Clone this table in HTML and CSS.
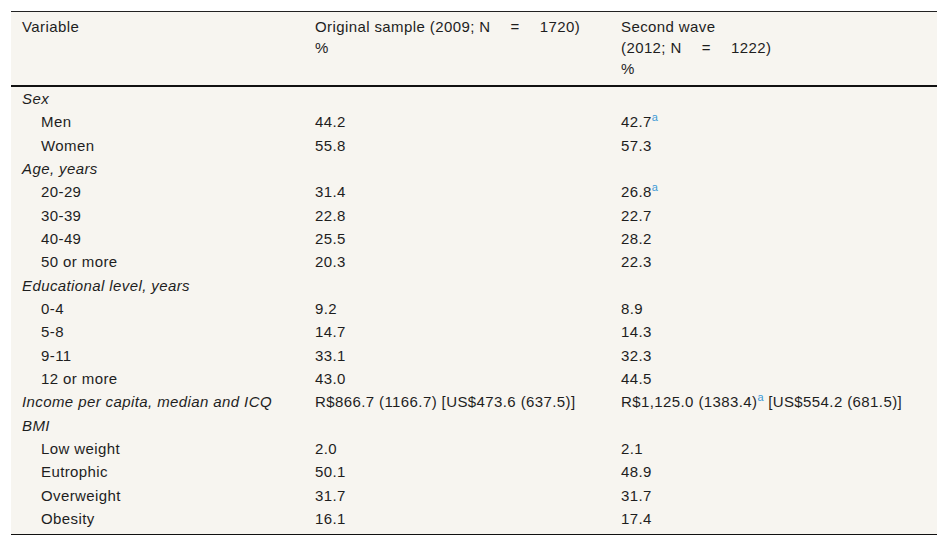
FILE: index.html
```html
<!DOCTYPE html>
<html lang="en">
<head>
<meta charset="utf-8">
<title>Table</title>
<link rel="stylesheet" href="styles.css">
</head>
<body>
<div class="wrap">
<table class="data">
  <colgroup>
    <col class="c1"><col class="c2"><col class="c3">
  </colgroup>
  <thead>
    <tr>
      <th>Variable</th>
      <th>Original sample (2009; N<span class="eq">=</span>1720)<br>%</th>
      <th>Second wave<br>(2012; N<span class="eq">=</span>1222)<br>%</th>
    </tr>
  </thead>
  <tbody>
    <tr><td class="grp">Sex</td><td></td><td></td></tr>
    <tr><td class="sub">Men</td><td>44.2</td><td>42.7<sup class="fn">a</sup></td></tr>
    <tr><td class="sub">Women</td><td>55.8</td><td>57.3</td></tr>
    <tr><td class="grp">Age, years</td><td></td><td></td></tr>
    <tr><td class="sub">20-29</td><td>31.4</td><td>26.8<sup class="fn">a</sup></td></tr>
    <tr><td class="sub">30-39</td><td>22.8</td><td>22.7</td></tr>
    <tr><td class="sub">40-49</td><td>25.5</td><td>28.2</td></tr>
    <tr><td class="sub">50 or more</td><td>20.3</td><td>22.3</td></tr>
    <tr><td class="grp">Educational level, years</td><td></td><td></td></tr>
    <tr><td class="sub">0-4</td><td>9.2</td><td>8.9</td></tr>
    <tr><td class="sub">5-8</td><td>14.7</td><td>14.3</td></tr>
    <tr><td class="sub">9-11</td><td>33.1</td><td>32.3</td></tr>
    <tr><td class="sub">12 or more</td><td>43.0</td><td>44.5</td></tr>
    <tr><td class="grp">Income per capita, median and ICQ</td><td>R$866.7 (1166.7) [US$473.6 (637.5)]</td><td>R$1,125.0 (1383.4)<sup class="fn">a</sup> [US$554.2 (681.5)]</td></tr>
    <tr><td class="grp">BMI</td><td></td><td></td></tr>
    <tr><td class="sub">Low weight</td><td>2.0</td><td>2.1</td></tr>
    <tr><td class="sub">Eutrophic</td><td>50.1</td><td>48.9</td></tr>
    <tr><td class="sub">Overweight</td><td>31.7</td><td>31.7</td></tr>
    <tr class="last"><td class="sub">Obesity</td><td>16.1</td><td>17.4</td></tr>
  </tbody>
</table>
</div>
</body>
</html>
```

FILE: styles.css
```css
html, body {
  margin: 0;
  padding: 0;
  background: #ffffff;
}

.wrap {
  padding: 11px 0 0 11px;
}

.data {
  width: 926px;
  table-layout: fixed;
  border-collapse: collapse;
  background: #f7f5f0;
  font-family: "Liberation Sans", Arial, sans-serif;
  font-size: 15px;
  letter-spacing: 0.4px;
  color: #1e1e1e;
}

.c1 { width: 293px; }
.c2 { width: 306px; }
.c3 { width: 327px; }

.data thead tr {
  border-top: 1px solid #222222;
  border-bottom: 2px solid #111111;
}

.data th {
  font-weight: normal;
  text-align: left;
  vertical-align: top;
  line-height: 21px;
  padding: 4px 11px 6px 11px;
}

.data td {
  text-align: left;
  vertical-align: top;
  line-height: 21.33px;
  padding: 1px 11px 1px 11px;
  white-space: nowrap;
}

.data tbody tr.last {
  border-bottom: 1px solid #111111;
}

.data tbody tr.last td {
  padding-bottom: 5px;
}

.data td.grp {
  font-style: italic;
}

.data td.sub {
  padding-left: 30px;
}

.eq {
  display: inline-block;
  padding: 0 20px;
}

.fn {
  color: #3d9ad6;
  font-size: 11px;
  letter-spacing: 0;
  line-height: 0;
  vertical-align: 6px;
}
```
